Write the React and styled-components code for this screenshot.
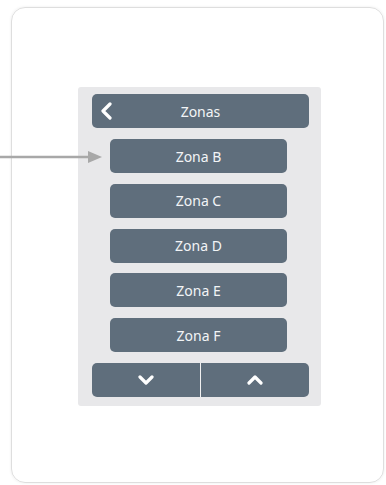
import React from "react";
import styled, { createGlobalStyle } from "styled-components";

const GlobalStyle = createGlobalStyle`
  html, body {
    margin: 0;
    padding: 0;
    background: #ffffff;
  }
  body {
    font-family: "Noto Sans", "Liberation Sans", sans-serif;
  }
`;

const zones = ["Zona B", "Zona C", "Zona D", "Zona E", "Zona F"];

const Chevron = ({ dir }) => {
  const paths = {
    left: "M11 2 L4 9 L11 16",
    down: "M2 4 L8 10 L14 4",
    up: "M2 10 L8 4 L14 10",
  };
  const size = dir === "left" ? { w: 14, h: 18, vb: "0 0 14 18" } : { w: 16, h: 14, vb: "0 0 16 14" };
  return (
    <svg width={size.w} height={size.h} viewBox={size.vb} fill="none">
      <path d={paths[dir]} stroke="#ffffff" strokeWidth="3.2" strokeLinecap="round" strokeLinejoin="round" />
    </svg>
  );
};

export default function App() {
  return (
    <>
      <GlobalStyle />
      <Page>
        <Pointer>
          <svg width="102" height="14" viewBox="0 0 102 14">
            <line x1="0" y1="7" x2="90" y2="7" stroke="#a8a8a8" strokeWidth="2.5" />
            <polygon points="88,1 102,7 88,13" fill="#a8a8a8" />
          </svg>
        </Pointer>
        <Card>
          <Panel>
            <HeaderBar>
              <BackIcon>
                <Chevron dir="left" />
              </BackIcon>
              <Title>Zonas</Title>
            </HeaderBar>
            <ZoneList>
              {zones.map((z) => (
                <ZoneButton key={z}>{z}</ZoneButton>
              ))}
            </ZoneList>
            <ScrollBar>
              <ScrollButton>
                <Chevron dir="down" />
              </ScrollButton>
              <Divider />
              <ScrollButton>
                <Chevron dir="up" />
              </ScrollButton>
            </ScrollBar>
          </Panel>
        </Card>
      </Page>
    </>
  );
}

const Page = styled.div`
  position: relative;
  width: 386px;
  height: 485px;
  padding: 7px 0 0 11px;
  box-sizing: border-box;
  overflow: hidden;
`;

const Pointer = styled.div`
  position: absolute;
  left: 0;
  top: 150px;
  display: flex;
`;

const Card = styled.div`
  width: 373px;
  height: 476px;
  box-sizing: border-box;
  border: 1px solid #dedede;
  border-radius: 14px;
  box-shadow: 0 0 3px rgba(0, 0, 0, 0.08);
  padding: 79px 0 0 66px;
`;

const Panel = styled.div`
  width: 243px;
  box-sizing: border-box;
  background: #e8e8ea;
  border-radius: 3px;
  padding: 7px 12px 9px 14px;
  display: flex;
  flex-direction: column;
  gap: 11px;
`;

const HeaderBar = styled.div`
  position: relative;
  height: 34px;
  background: #5f6e7c;
  border-radius: 5px;
  display: flex;
  align-items: center;
  justify-content: center;
`;

const BackIcon = styled.span`
  position: absolute;
  left: 7px;
  top: 8px;
  display: flex;
`;

const Title = styled.span`
  color: #f2f4f6;
  font-size: 14px;
`;

const ZoneList = styled.div`
  display: flex;
  flex-direction: column;
  gap: 10.75px;
  padding-left: 18px;
`;

const ZoneButton = styled.div`
  width: 177px;
  height: 34px;
  background: #5f6e7c;
  border-radius: 5px;
  color: #f2f4f6;
  font-size: 14px;
  display: flex;
  align-items: center;
  justify-content: center;
`;

const ScrollBar = styled.div`
  height: 34px;
  display: flex;
  border-radius: 5px;
  overflow: hidden;
`;

const ScrollButton = styled.div`
  flex: 1;
  background: #5f6e7c;
  display: flex;
  align-items: center;
  justify-content: center;
`;

const Divider = styled.div`
  width: 1px;
  background: #f0f0f0;
`;
